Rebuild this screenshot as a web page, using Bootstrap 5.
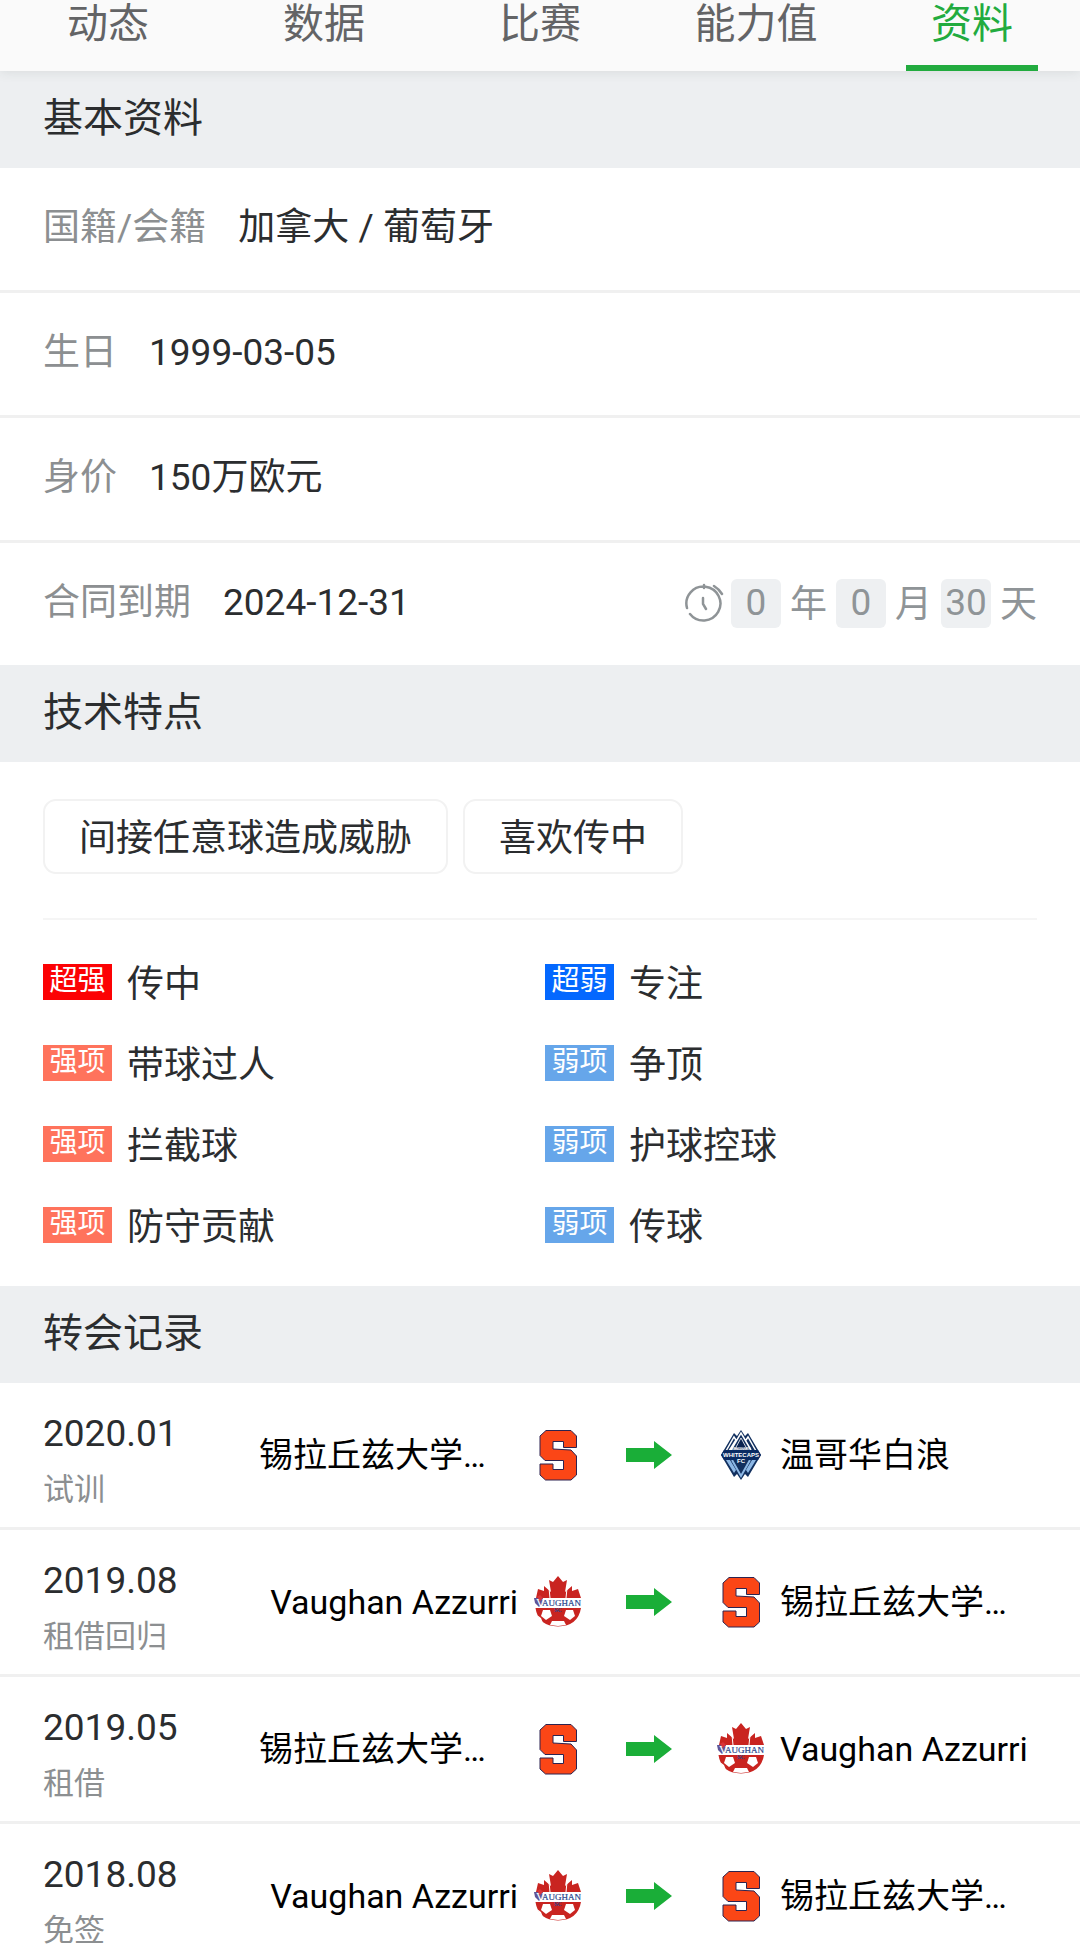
<!DOCTYPE html>
<html lang="zh-CN">
<head>
<meta charset="utf-8">
<meta name="viewport" content="width=device-width, initial-scale=1">
<title>球员资料</title>
<link href="https://cdn.jsdelivr.net/npm/bootstrap@5.3.0/dist/css/bootstrap.min.css" rel="stylesheet">
<style>
body{font-family:Roboto,"Noto Sans CJK SC",sans-serif;color:#2b2d2f;font-size:37px;line-height:48px}
.tabbar{background:#fafafa;box-shadow:0 0 12px rgba(40,60,50,.12);position:relative;z-index:1}
.tabbar .nav-link{font-size:41px;line-height:48px;color:#636466;padding:0 0 17px;width:132px;white-space:nowrap;display:flex;justify-content:center;border-bottom:6px solid transparent;border-radius:0}
.tabbar .nav-link.active{color:#22ab3f;border-color:#22ab3f}
.sec-head{background:#edeff1;font-size:40px;line-height:48px;font-weight:400;padding:24px 43px 25px;margin:0}
.info-row{padding:36px 43px 38px;border-bottom:3px solid #f0f0f0;gap:32px}
.info-row:last-child{border-bottom:0}
.info-row dt,.info-row dd{font-weight:400;margin:0}
.info-row dt,.kind{color:#8c8f91}
.countdown{color:#8f9497;gap:9px;height:48px}
.num-box{background:#eef0f2;border-radius:6px;width:50px;height:49px;line-height:47px;text-align:center}
.unit{padding-top:4px}
.clock{width:40px;height:40px;margin-right:-2px}
.traits{padding:37px 43px 0}
.chips{gap:15px}
.trait{border:2px solid #f2f2f2;border-radius:13px;height:75px;padding:14px 34px 0}
.trait-line{border-top:2px solid #f5f5f5;margin-top:44px;padding:21px 0;column-gap:10px;grid-template-columns:1fr 1fr}
.skill{height:81px;gap:15px}
.skill-name{padding-top:6px}
.tag-box{width:69px;height:36px;font-size:28px;line-height:33px;color:#fff;text-align:center;white-space:nowrap}
.t-red{background:#fc0204}.t-coral{background:#ff735c}.t-blue{background:#0468ff}.t-sky{background:#66a6ea}
.deal{height:147px;border-bottom:3px solid #f0f0f0;padding:0 43px}
.deal-when{width:216px;padding-top:27px}
.kind{font-size:31px;line-height:48px;margin-top:8px}
.team{font-size:34px;color:#000;white-space:nowrap;height:48px}
.team-from{width:259px;margin-right:15px}
.team-to{margin-left:14px}
.crest{width:50px;height:52px}
.arrow{width:46px;height:28px;margin:0 44px 0 43px}
</style>
</head>
<body class="bg-white vh-100 overflow-hidden">
<svg class="d-none" xmlns="http://www.w3.org/2000/svg">
<symbol id="c-syr" viewBox="0 0 50 52"><path d="M13 1.500H38L43.500 7V18.500H30.500V12.500H20V20L38 21L43.500 27V46L38 51H12.500L7 46V35H20V40.500H30.500V31.500H12L7 26.500V7Z" fill="#fb4616" stroke="#2c2350"/></symbol>
<symbol id="c-vau" viewBox="0 0 50 52">
<path d="M3 22L5 13L11 15V10L18 16L16 4L20 6L25 0L30 6L34 4L32 16L39 10V15L45 13L48 22Z" fill="#c92420"/>
<path d="M17 22L16 12M33 22L34 12" stroke="#fff" stroke-width="1"/>
<path d="M2.500 32H48Q45 50 25 50.500Q5 50 2.500 32Z" fill="#c92420"/>
<path d="M10 34H17L19 40L13 44L8 40ZM33 34H40L42 40L37 44L31 40ZM19 45H31L33 49L25 50L17 49ZM4 39L6 43L10 47L8 42Z" fill="#fff"/>
<path d="M1 22H10L9 28L6 31L2 27Z" fill="#5e5496"/><path d="M4 21L7 19L10 22L7 25Z" fill="#d9343a"/>
<text x="3" y="31" font-family="Liberation Serif" font-size="12" fill="#fff">V</text>
<text x="9" y="30" font-family="Liberation Serif" font-size="9" fill="#29458c" stroke="#29458c" stroke-width=".2">AUGHAN</text>
<text x="25" y="36" text-anchor="middle" font-family="Liberation Serif" font-weight="700" font-size="6" fill="#29458c">SC</text>
</symbol>
<symbol id="c-van" viewBox="0 0 50 52">
<path d="M25 1L29 7L32 4L45 26L32 48L29 45L25 51L21 45L18 48L5 26L18 4L21 7Z" fill="#12305f"/>
<path d="M10 22L18 8L20 11L13 22M15 21L25 4L35 21M30 11L32 8L40 22" fill="none" stroke="#fff" stroke-width="1.500"/>
<path d="M19 20L25 9L31 20Z" fill="#0a2350" stroke="#fff" stroke-width=".8"/>
<path d="M10 31L18 44L20 41L14 31ZM40 31L32 44L30 41L36 31Z" fill="#8db8e6"/>
<path d="M16 31L25 47L34 31" fill="none" stroke="#8db8e6" stroke-width="2"/>
<path d="M5 26L8 21H42L45 26L42 31H8Z" fill="#0a2b63"/>
<text x="25" y="21" text-anchor="middle" font-family="Liberation Sans" font-weight="700" font-size="3" fill="#fff">VANCOUVER</text>
<text x="25" y="28" text-anchor="middle" font-family="Liberation Sans" font-weight="700" font-size="6" fill="#fff">WHITECAPS</text>
<text x="25" y="34" text-anchor="middle" font-family="Liberation Sans" font-weight="700" font-size="6" fill="#fff">FC</text>
</symbol>
<symbol id="i-arrow" viewBox="0 0 46 28"><path d="M0 7H28V0L46 14L28 28V21H0Z" fill="#1aae38"/></symbol>
</svg>
<nav class="tabbar">
<ul class="nav flex-nowrap list-unstyled m-0">
<li class="col d-flex justify-content-center"><a class="nav-link" href="#">动态</a></li>
<li class="col d-flex justify-content-center"><a class="nav-link" href="#">数据</a></li>
<li class="col d-flex justify-content-center"><a class="nav-link" href="#">比赛</a></li>
<li class="col d-flex justify-content-center"><a class="nav-link" href="#">能力值</a></li>
<li class="col d-flex justify-content-center"><a class="nav-link active" href="#" aria-current="page">资料</a></li>
</ul>
</nav>
<main>
<section>
<h2 class="sec-head">基本资料</h2>
<dl class="m-0">
<div class="info-row d-flex"><dt>国籍/会籍</dt><dd>加拿大 / 葡萄牙</dd></div>
<div class="info-row d-flex"><dt>生日</dt><dd>1999-03-05</dd></div>
<div class="info-row d-flex"><dt>身价</dt><dd>150万欧元</dd></div>
<div class="info-row d-flex"><dt>合同到期</dt><dd>2024-12-31</dd>
<dd class="countdown d-flex align-items-center ms-auto">
<svg class="clock" viewBox="0 0 40 40" fill="none" stroke="#8f9497" stroke-width="2.500" stroke-linecap="round"><path d="M3 25A17 17 0 1 1 6 31M20 2V5M19 15V21L22 26M30 3Q35 6 38 11"/></svg>
<span class="num-box">0</span><span class="unit">年</span><span class="num-box">0</span><span class="unit">月</span><span class="num-box">30</span><span class="unit">天</span></dd></div>
</dl>
</section>
<section>
<h2 class="sec-head">技术特点</h2>
<div class="traits">
<div class="chips d-flex"><span class="trait">间接任意球造成威胁</span><span class="trait">喜欢传中</span></div>
<div class="trait-line d-grid">
<div>
<div class="skill d-flex align-items-center"><span class="tag-box t-red">超强</span><span class="skill-name">传中</span></div>
<div class="skill d-flex align-items-center"><span class="tag-box t-coral">强项</span><span class="skill-name">带球过人</span></div>
<div class="skill d-flex align-items-center"><span class="tag-box t-coral">强项</span><span class="skill-name">拦截球</span></div>
<div class="skill d-flex align-items-center"><span class="tag-box t-coral">强项</span><span class="skill-name">防守贡献</span></div>
</div>
<div>
<div class="skill d-flex align-items-center"><span class="tag-box t-blue">超弱</span><span class="skill-name">专注</span></div>
<div class="skill d-flex align-items-center"><span class="tag-box t-sky">弱项</span><span class="skill-name">争顶</span></div>
<div class="skill d-flex align-items-center"><span class="tag-box t-sky">弱项</span><span class="skill-name">护球控球</span></div>
<div class="skill d-flex align-items-center"><span class="tag-box t-sky">弱项</span><span class="skill-name">传球</span></div>
</div>
</div>
</div>
</section>
<section>
<h2 class="sec-head">转会记录</h2>
<div class="deal d-flex align-items-center">
<div class="deal-when align-self-start"><div>2020.01</div><div class="kind">试训</div></div>
<span class="team team-from">锡拉丘兹大学…</span><svg class="crest"><use href="#c-syr"/></svg>
<svg class="arrow"><use href="#i-arrow"/></svg>
<svg class="crest"><use href="#c-van"/></svg><span class="team team-to">温哥华白浪</span>
</div>
<div class="deal d-flex align-items-center">
<div class="deal-when align-self-start"><div>2019.08</div><div class="kind">租借回归</div></div>
<span class="team team-from text-end">Vaughan Azzurri</span><svg class="crest"><use href="#c-vau"/></svg>
<svg class="arrow"><use href="#i-arrow"/></svg>
<svg class="crest"><use href="#c-syr"/></svg><span class="team team-to">锡拉丘兹大学…</span>
</div>
<div class="deal d-flex align-items-center">
<div class="deal-when align-self-start"><div>2019.05</div><div class="kind">租借</div></div>
<span class="team team-from">锡拉丘兹大学…</span><svg class="crest"><use href="#c-syr"/></svg>
<svg class="arrow"><use href="#i-arrow"/></svg>
<svg class="crest"><use href="#c-vau"/></svg><span class="team team-to">Vaughan Azzurri</span>
</div>
<div class="deal d-flex align-items-center">
<div class="deal-when align-self-start"><div>2018.08</div><div class="kind">免签</div></div>
<span class="team team-from text-end">Vaughan Azzurri</span><svg class="crest"><use href="#c-vau"/></svg>
<svg class="arrow"><use href="#i-arrow"/></svg>
<svg class="crest"><use href="#c-syr"/></svg><span class="team team-to">锡拉丘兹大学…</span>
</div>
</section>
</main>
<script src="https://cdn.jsdelivr.net/npm/bootstrap@5.3.0/dist/js/bootstrap.bundle.min.js"></script>
</body>
</html>
